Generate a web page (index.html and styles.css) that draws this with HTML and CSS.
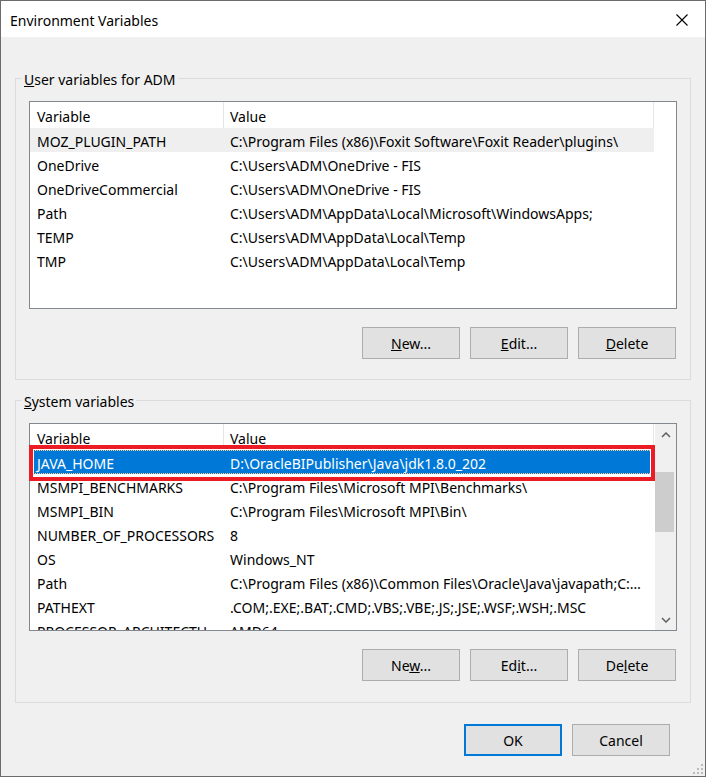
FILE: index.html
```html
<!DOCTYPE html>
<html lang="en">
<head>
    <meta charset="UTF-8">
    <meta name="viewport" content="width=device-width, initial-scale=1.0">
    <title>Environment Variables</title>
    <link rel="stylesheet" href="styles.css">
</head>
<body>
    <div class="window">
        <div class="titlebar">
            <span class="title">Environment Variables</span>
            <span class="close">
                <svg width="12" height="12" viewBox="0 0 12 12"><path d="M0.5 0.5L11.5 11.5M11.5 0.5L0.5 11.5" stroke="#000" stroke-width="1.1" fill="none"/></svg>
            </span>
        </div>

        <div class="content">
            <!-- per-user variables -->
            <fieldset class="group group-user">
                <legend><u>U</u>ser variables for ADM</legend>
                <div class="listview">
                    <div class="lv-main">
                        <div class="lv-header">
                            <div class="col-name">Variable</div>
                            <div class="col-value">Value</div>
                        </div>
                        <div class="row hot">
                            <div class="col-name">MOZ_PLUGIN_PATH</div>
                            <div class="col-value">C:\Program Files (x86)\Foxit Software\Foxit Reader\plugins\</div>
                        </div>
                        <div class="row">
                            <div class="col-name">OneDrive</div>
                            <div class="col-value">C:\Users\ADM\OneDrive - FIS</div>
                        </div>
                        <div class="row">
                            <div class="col-name">OneDriveCommercial</div>
                            <div class="col-value">C:\Users\ADM\OneDrive - FIS</div>
                        </div>
                        <div class="row">
                            <div class="col-name">Path</div>
                            <div class="col-value">C:\Users\ADM\AppData\Local\Microsoft\WindowsApps;</div>
                        </div>
                        <div class="row">
                            <div class="col-name">TEMP</div>
                            <div class="col-value">C:\Users\ADM\AppData\Local\Temp</div>
                        </div>
                        <div class="row">
                            <div class="col-name">TMP</div>
                            <div class="col-value">C:\Users\ADM\AppData\Local\Temp</div>
                        </div>
                    </div>
                </div>
                <div class="buttons">
                    <button class="btn"><u>N</u>ew...</button>
                    <button class="btn"><u>E</u>dit...</button>
                    <button class="btn"><u>D</u>elete</button>
                </div>
            </fieldset>

            <!-- machine-wide variables -->
            <fieldset class="group group-system">
                <legend><u>S</u>ystem variables</legend>
                <div class="listview">
                    <div class="lv-main">
                        <div class="lv-header">
                            <div class="col-name">Variable</div>
                            <div class="col-value">Value</div>
                        </div>
                        <div class="row selected">
                            <div class="col-name">JAVA_HOME</div>
                            <div class="col-value">D:\OracleBIPublisher\Java\jdk1.8.0_202</div>
                        </div>
                        <div class="row">
                            <div class="col-name">MSMPI_BENCHMARKS</div>
                            <div class="col-value">C:\Program Files\Microsoft MPI\Benchmarks\</div>
                        </div>
                        <div class="row">
                            <div class="col-name">MSMPI_BIN</div>
                            <div class="col-value">C:\Program Files\Microsoft MPI\Bin\</div>
                        </div>
                        <div class="row">
                            <div class="col-name">NUMBER_OF_PROCESSORS</div>
                            <div class="col-value">8</div>
                        </div>
                        <div class="row">
                            <div class="col-name">OS</div>
                            <div class="col-value">Windows_NT</div>
                        </div>
                        <div class="row">
                            <div class="col-name">Path</div>
                            <div class="col-value">C:\Program Files (x86)\Common Files\Oracle\Java\javapath;C:…</div>
                        </div>
                        <div class="row">
                            <div class="col-name">PATHEXT</div>
                            <div class="col-value">.COM;.EXE;.BAT;.CMD;.VBS;.VBE;.JS;.JSE;.WSF;.WSH;.MSC</div>
                        </div>
                        <div class="row">
                            <div class="col-name">PROCESSOR_ARCHITECTU…</div>
                            <div class="col-value">AMD64</div>
                        </div>
                    </div>
                    <div class="scrollbar">
                        <div class="sb-arrow">
                            <svg width="10" height="6" viewBox="0 0 10 6"><path d="M1 5L5 1L9 5" stroke="#606060" stroke-width="1.5" fill="none"/></svg>
                        </div>
                        <div class="sb-track"><div class="sb-thumb"></div></div>
                        <div class="sb-arrow">
                            <svg width="10" height="6" viewBox="0 0 10 6"><path d="M1 1L5 5L9 1" stroke="#606060" stroke-width="1.5" fill="none"/></svg>
                        </div>
                    </div>
                    <span class="mark"></span>
                </div>
                <div class="buttons">
                    <button class="btn">Ne<u>w</u>...</button>
                    <button class="btn">Ed<u>i</u>t...</button>
                    <button class="btn">De<u>l</u>ete</button>
                </div>
            </fieldset>

            <div class="footer">
                <button class="btn btn-default">OK</button>
                <button class="btn">Cancel</button>
            </div>
        </div>

        <svg class="grip" width="12" height="12" viewBox="0 0 12 12">
            <rect x="9" y="1" width="2" height="2" fill="#bcbcbc"/>
            <rect x="5" y="5" width="2" height="2" fill="#bcbcbc"/>
            <rect x="9" y="5" width="2" height="2" fill="#bcbcbc"/>
            <rect x="1" y="9" width="2" height="2" fill="#bcbcbc"/>
            <rect x="5" y="9" width="2" height="2" fill="#bcbcbc"/>
            <rect x="9" y="9" width="2" height="2" fill="#bcbcbc"/>
        </svg>
    </div>
</body>
</html>
```

FILE: styles.css
```css
* {
    box-sizing: border-box;
}
body {
    margin: 0;
    font-family: "Segoe UI", "Noto Sans", sans-serif;
    font-size: 14px;
    color: #000;
    background: #fff;
}
.window {
    position: relative;
    width: 706px;
    height: 777px;
    border: 1px solid #6b6b6b;
    background: #f0f0f0;
    display: flex;
    flex-direction: column;
}
.titlebar {
    height: 36px;
    background: #fff;
    display: flex;
    align-items: center;
    justify-content: space-between;
    padding: 2px 0 0 9px;
}
.close {
    width: 46px;
    height: 34px;
    display: flex;
    align-items: center;
    justify-content: center;
}
.content {
    padding: 0 14px;
}
.group {
    margin: 10px 0 0;
    padding: 13px 13px 21px;
    border: 1px solid #dcdcdc;
    min-width: 0;
}
.group-user {
    margin-top: 31px;
    padding-bottom: 20px;
}
.group legend {
    padding: 3px 2px 0;
    margin-left: -7px;
    line-height: 17px;
}
.listview {
    position: relative;
    height: 208px;
    border: 1px solid #828790;
    background: #fff;
    display: flex;
}
.lv-main {
    flex: 1;
    overflow: hidden;
}
.lv-header,
.row {
    display: flex;
    width: 624px;
    white-space: nowrap;
}
.lv-header {
    height: 26px;
}
.row {
    height: 24px;
    padding-top: 4px;
    line-height: 20px;
}
.col-name {
    width: 194px;
    padding-left: 7px;
    overflow: hidden;
}
.col-value {
    width: 430px;
    padding-left: 6px;
    overflow: hidden;
}
.lv-header .col-name,
.lv-header .col-value {
    border-right: 1px solid #e5e5e5;
    padding-top: 4px;
    line-height: 22px;
}
.row.hot {
    background: #efefef;
}
.row.selected {
    background: #0078d7;
    color: #fff;
    outline: 1px dotted #f9cf93;
    outline-offset: -1px;
}
.scrollbar {
    width: 21px;
    background: #f0f0f0;
    display: flex;
    flex-direction: column;
}
.sb-arrow {
    height: 21px;
    display: flex;
    align-items: center;
    justify-content: center;
}
.sb-track {
    flex: 1;
    padding-top: 27px;
}
.sb-thumb {
    width: 19px;
    height: 60px;
    background: #cdcdcd;
}
/* red box drawn round the selected entry */
.mark {
    position: absolute;
    left: -1px;
    top: 21px;
    width: 626px;
    height: 36px;
    border: 4px solid #ec1c24;
    box-shadow: inset 0 0 0 1px #fff;
}
.buttons {
    display: flex;
    justify-content: flex-end;
    gap: 10px;
    margin-top: 18px;
    padding-right: 1px;
}
.btn {
    width: 98px;
    height: 32px;
    background: #e1e1e1;
    border: 1px solid #adadad;
    font-family: inherit;
    font-size: 14px;
    color: #000;
    padding: 0;
}
.btn-default {
    border: 2px solid #0078d7;
}
.footer {
    display: flex;
    justify-content: flex-end;
    gap: 10px;
    margin-top: 21px;
    padding-right: 21px;
}
.grip {
    position: absolute;
    right: 1px;
    bottom: 1px;
}
```
